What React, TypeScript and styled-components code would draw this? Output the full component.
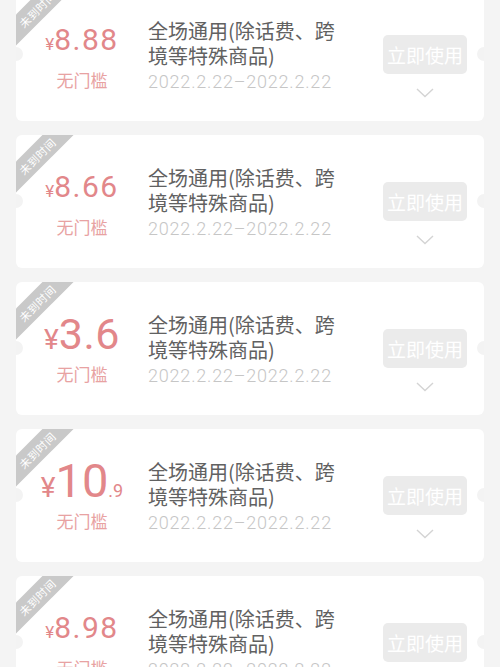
import React from "react"
import styled, { createGlobalStyle } from "styled-components"

const Global = createGlobalStyle`
    html, body {
        margin: 0;
        padding: 0;
        background: #f4f4f4;
        overflow: hidden;
    }
    body {
        font-family: "Noto Sans CJK SC", "Noto Sans", sans-serif;
    }
`

const Page = styled.div`
    display: flex;
    flex-direction: column;
    gap: 14px;
    padding: 0 16px;
    margin-top: -12px;
`

const Card = styled.div`
    position: relative;
    display: flex;
    flex-direction: row;
    height: 133px;
    background: #ffffff;
    border-radius: 6px;
    overflow: hidden;
`

const Notch = styled.span<{ $side: "left" | "right" }>`
    position: absolute;
    top: 59px;
    ${(p) => (p.$side === "left" ? "left: -7px;" : "right: -7px;")}
    width: 14px;
    height: 14px;
    border-radius: 50%;
    background: #f3f3f3;
`

const Ribbon = styled.div`
    position: absolute;
    top: 10px;
    left: -29px;
    width: 100px;
    height: 22px;
    line-height: 22px;
    transform: rotate(-45deg);
    background: #c9c9c9;
    color: #ffffff;
    font-size: 11px;
    text-align: center;
    letter-spacing: 0.5px;
`

const Left = styled.div`
    display: flex;
    flex-direction: column;
    align-items: center;
    width: 132px;
    padding-top: 30px;
    box-sizing: border-box;
`

const Price = styled.div`
    display: flex;
    flex-direction: row;
    align-items: baseline;
    height: 44px;
    line-height: 44px;
    color: #e2878a;
    font-family: "Roboto", "Liberation Sans", sans-serif;
`

const Amount = styled.span<{ $size: number; $spacing?: number }>`
    font-size: ${(p) => p.$size}px;
    letter-spacing: ${(p) => p.$spacing ?? 0}px;
`

const Threshold = styled.div`
    margin-top: 6px;
    line-height: 24px;
    font-size: 17px;
    color: #e8a2a2;
`

const Middle = styled.div`
    display: flex;
    flex-direction: column;
    flex: 1;
    padding-top: 30px;
`

const Title = styled.div`
    width: 200px;
    font-size: 20px;
    line-height: 25px;
    color: #616161;
`

const Dates = styled.div`
    margin-top: 2px;
    line-height: 24px;
    font-family: "Roboto", "Liberation Sans", sans-serif;
    font-weight: 300;
    font-size: 18px;
    letter-spacing: 0.8px;
    color: #c6c6c6;
`

const Right = styled.div`
    display: flex;
    flex-direction: column;
    align-items: center;
    width: 84px;
    margin-right: 17px;
    padding-top: 47px;
`

const UseButton = styled.button`
    width: 84px;
    height: 39px;
    border: none;
    border-radius: 5px;
    background: #ebebeb;
    color: #ffffff;
    font-family: "Noto Sans CJK SC", sans-serif;
    font-size: 19px;
    padding: 0;
`

const Chevron = styled.svg`
    margin-top: 14px;
`

interface Coupon {
    yenSize: number
    main: string
    mainSize: number
    dec?: string
    decSize?: number
    spacing?: number
}

const coupons: Coupon[] = [
    { yenSize: 17, main: "8.88", mainSize: 30, spacing: 1.5 },
    { yenSize: 17, main: "8.66", mainSize: 30, spacing: 1.5 },
    { yenSize: 28, main: "3.6", mainSize: 43, spacing: 0.5 },
    { yenSize: 28, main: "10", mainSize: 47, dec: ".9", decSize: 18 },
    { yenSize: 17, main: "8.98", mainSize: 30, spacing: 1.5 },
]

const CouponCard = ({ c }: { c: Coupon }) => (
    <Card>
        <Ribbon>未到时间</Ribbon>
        <Notch $side="left" />
        <Notch $side="right" />
        <Left>
            <Price>
                <Amount $size={c.yenSize}>¥</Amount>
                <Amount $size={c.mainSize} $spacing={c.spacing}>{c.main}</Amount>
                {c.dec && <Amount $size={c.decSize ?? 18}>{c.dec}</Amount>}
            </Price>
            <Threshold>无门槛</Threshold>
        </Left>
        <Middle>
            <Title>全场通用(除话费、跨境等特殊商品)</Title>
            <Dates>2022.2.22–2022.2.22</Dates>
        </Middle>
        <Right>
            <UseButton>立即使用</UseButton>
            <Chevron width="18" height="10" viewBox="0 0 18 10">
                <path d="M1 1 L9 8.5 L17 1" fill="none" stroke="#d4d4d4" strokeWidth="1.4" />
            </Chevron>
        </Right>
    </Card>
)

const App = () => (
    <>
        <Global />
        <Page>
            {coupons.map((c, i) => (
                <CouponCard key={i} c={c} />
            ))}
        </Page>
    </>
)

export default App
